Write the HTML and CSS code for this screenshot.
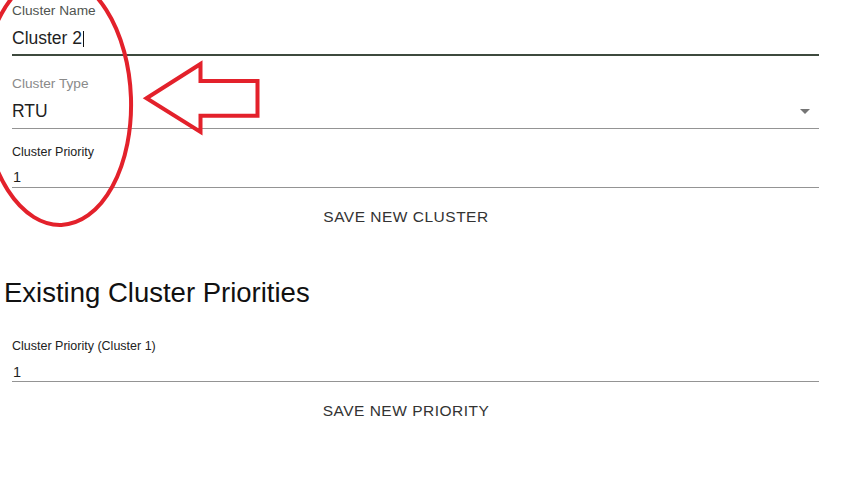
FILE: index.html
```html
<!DOCTYPE html>
<html>
<head>
<meta charset="utf-8">
<link rel="stylesheet" href="styles.css">
</head>
<body>
<div class="page">
  <div class="field field-name">
    <div class="label label-focused">Cluster Name</div>
    <div class="value value-lg">Cluster 2<span class="caret"></span></div>
  </div>
  <div class="field field-type">
    <div class="label label-muted">Cluster Type</div>
    <div class="value value-lg value-select">
      <span>RTU</span>
      <svg class="dropdown" width="10" height="5" viewBox="0 0 10 5"><path d="M0 0 L10 0 L5 5 Z" fill="#757575"/></svg>
    </div>
  </div>
  <div class="field field-priority">
    <div class="label label-sm">Cluster Priority</div>
    <div class="value value-sm">1</div>
  </div>
  <div class="button-row row-cluster">
    <span class="text-button">SAVE NEW CLUSTER</span>
  </div>

  <h2 class="heading">Existing Cluster Priorities</h2>

  <div class="field field-existing">
    <div class="label label-sm">Cluster Priority (Cluster 1)</div>
    <div class="value value-sm value-existing">1</div>
  </div>
  <div class="button-row row-priority">
    <span class="text-button">SAVE NEW PRIORITY</span>
  </div>
</div>

<svg class="annotation" width="841" height="483" viewBox="0 0 841 483">
  <ellipse cx="57" cy="100" rx="74" ry="125" transform="rotate(-2 57 100)" fill="none" stroke="#e3212b" stroke-width="4"/>
  <polygon points="146.5,98.3 200.5,64 200.5,81 257.5,81 257.5,115.7 200.5,115.7 200.5,132" fill="none" stroke="#e3212b" stroke-width="4" stroke-linejoin="miter" stroke-miterlimit="10"/>
</svg>
</body>
</html>
```

FILE: styles.css
```css
html, body {
  margin: 0;
  padding: 0;
  background: #ffffff;
}

body {
  font-family: "Liberation Sans", Arial, sans-serif;
  color: #222222;
  width: 841px;
  height: 483px;
  overflow: hidden;
  position: relative;
}

.page {
  display: flex;
  flex-direction: column;
  padding-left: 4px;
}

.field {
  display: flex;
  flex-direction: column;
  margin-left: 8px;
  width: 807px;
  border-bottom: 1px solid #949494;
}

.label {
  font-size: 13.7px;
  line-height: 16px;
  height: 16px;
  white-space: nowrap;
}

.label-focused {
  color: #4f544f;
}

.label-muted {
  color: #8a8a8a;
}

.label-sm {
  font-size: 12.5px;
  line-height: 15px;
  height: 15px;
  color: #222222;
}

.value {
  white-space: nowrap;
  color: #1f1f1f;
}

.value-lg {
  font-size: 17.5px;
  line-height: 24px;
  height: 24px;
  margin-top: 7px;
}

.value-sm {
  font-size: 14.5px;
  line-height: 19px;
  height: 19px;
  margin-top: 8px;
  padding-left: 1px;
}

.value-existing {
  line-height: 17px;
  height: 17px;
  margin-top: 10px;
}

.caret {
  display: inline-block;
  width: 1px;
  height: 16px;
  background: #111111;
  vertical-align: -3px;
  margin-left: 1px;
}

.field-name {
  margin-top: 3px;
  padding-bottom: 4px;
  border-bottom: 2px solid #3e4a3e;
}

.field-type {
  margin-top: 20px;
  padding-bottom: 5px;
}

.value-select {
  display: flex;
  align-items: center;
  justify-content: space-between;
}

.dropdown {
  display: block;
  margin-right: 9px;
  margin-top: 1px;
}

.field-priority {
  margin-top: 16px;
}

.field-existing {
  margin-top: 30px;
}

.button-row {
  display: flex;
  justify-content: center;
  width: 804px;
}

.row-cluster {
  margin-top: 19px;
}

.row-priority {
  margin-top: 19px;
}

.text-button {
  font-size: 15.5px;
  line-height: 20px;
  letter-spacing: 0.5px;
  color: #333333;
  white-space: nowrap;
}

.heading {
  margin: 50px 0 0 0;
  font-size: 27.5px;
  line-height: 32px;
  font-weight: normal;
  color: #111111;
  white-space: nowrap;
}

.annotation {
  position: absolute;
  left: 0;
  top: 0;
  pointer-events: none;
}
```
